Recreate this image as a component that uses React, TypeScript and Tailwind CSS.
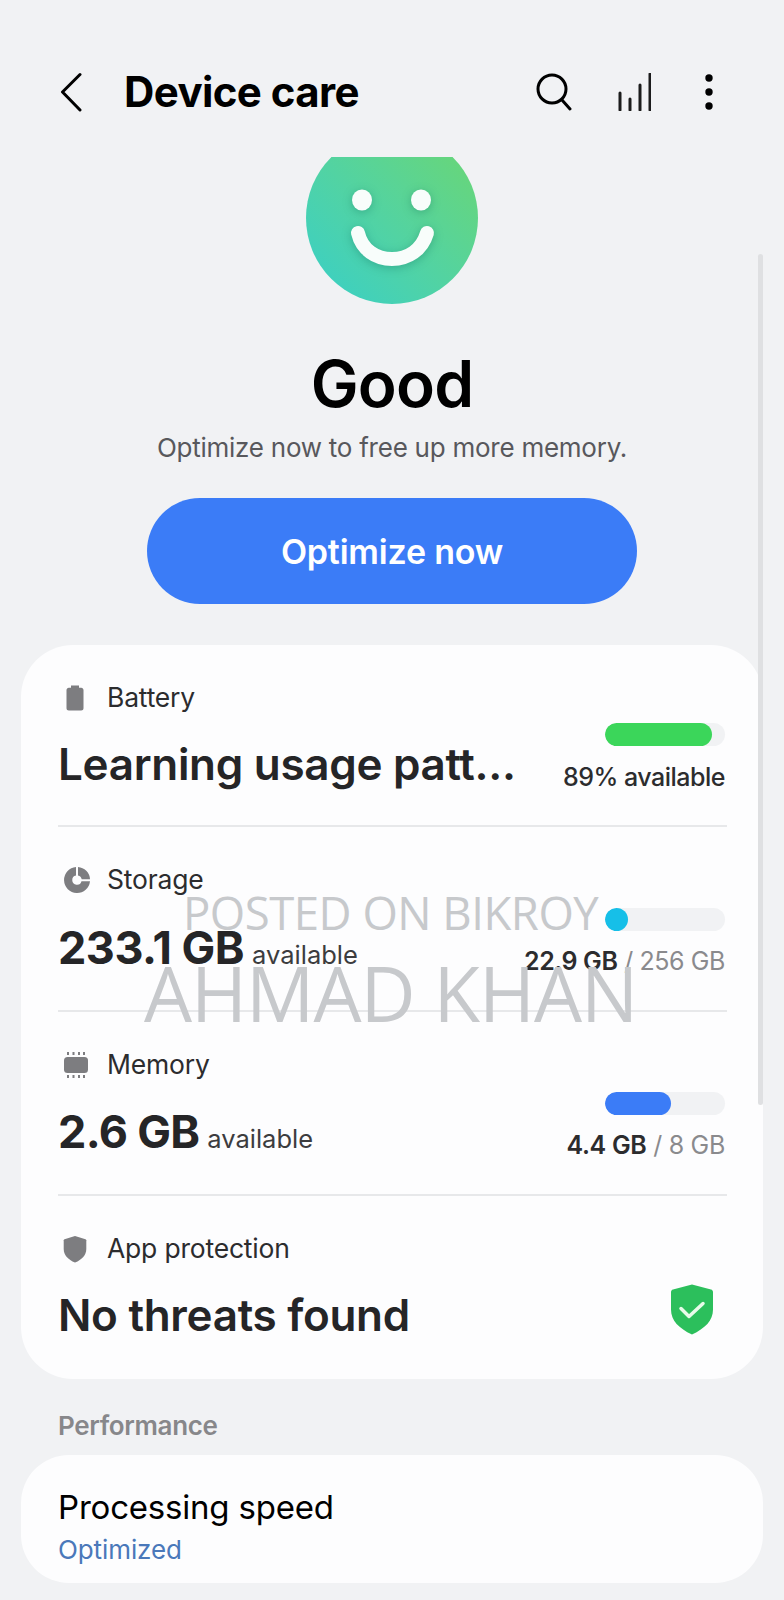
import * as React from "react";

const rowIcons = {
  battery: (
    <svg viewBox="0 0 24 28" className="w-[24px] h-[28px] fill-[#7d7d80]">
      <path d="M8 1.500h8v2.200h2.200c1.300 0 2.300 1 2.300 2.300v18.200c0 1.300-1 2.300-2.300 2.300H5.800c-1.300 0-2.300-1-2.300-2.300V6c0-1.300 1-2.300 2.300-2.300H8z" />
    </svg>
  ),
  storage: (
    <svg viewBox="0 0 28 28" className="w-[28px] h-[28px] fill-[#7d7d80]">
      <path d="M13 1.050A13 13 0 1 0 27 15.200H18.500A4.700 4.700 0 1 1 13 9.400z" />
      <path d="M15 1A13 13 0 0 1 27 13.200H18.700A4.700 4.700 0 0 0 15 9.400z" />
    </svg>
  ),
  memory: (
    <svg viewBox="0 0 26 28" className="w-[26px] h-[28px] fill-[#7d7d80]">
      <rect x="1" y="6" width="24" height="16" rx="3.500" />
      <rect x="4" y="1" width="2" height="3" />
      <rect x="9.500" y="1" width="2" height="3" />
      <rect x="15" y="1" width="2" height="3" />
      <rect x="20" y="1" width="2" height="3" />
      <rect x="4" y="24" width="2" height="3" />
      <rect x="9.500" y="24" width="2" height="3" />
      <rect x="15" y="24" width="2" height="3" />
      <rect x="20" y="24" width="2" height="3" />
    </svg>
  ),
  shield: (
    <svg viewBox="0 0 24 28" className="w-[24px] h-[28px] fill-[#7d7d80]">
      <path d="M12 1l10.500 3.200c.5.200.8.600.8 1.100V14c0 6-4.300 10.800-11.300 13.500C5 24.800.7 20 .7 14V5.300c0-.5.300-.9.800-1.100z" />
    </svg>
  ),
};

function Label({ icon, text }: { icon: React.ReactNode; text: string }) {
  return (
    <div className="flex items-center h-[32px]">
      <div className="w-[49px] pl-[5px] flex items-center">{icon}</div>
      <span className="text-[26.500px] text-[#2c2c2e] tracking-[-0.2px]">{text}</span>
    </div>
  );
}

function Bar({ fill, color }: { fill: string; color: string }) {
  return (
    <div className="w-[120px] h-[23px] rounded-full bg-[#f1f2f4] overflow-hidden">
      <div className={`h-full rounded-full ${fill} ${color}`} />
    </div>
  );
}

export default function App() {
  return (
    <div className="relative w-[784px] h-[1600px] bg-[#f1f2f4] overflow-hidden font-['Inter',sans-serif]">
      {/* Top bar */}
      <header className="flex items-center h-[157px] pl-[58px] pr-[71px] pt-[26px]">
        <svg viewBox="0 0 26 40" className="w-[26px] h-[40px] fill-none stroke-black stroke-[3] mr-[40px]">
          <path d="M22 2.500 4.500 20 22 38" strokeLinecap="round" strokeLinejoin="round" />
        </svg>
        <h1 className="text-[42px] font-bold text-black tracking-[-0.6px] flex-1">Device care</h1>
        <svg viewBox="0 0 38 38" className="w-[38px] h-[38px] fill-none stroke-black stroke-[3] mr-[44px]">
          <circle cx="17" cy="16" r="14" />
          <path d="m27 27 8 9" strokeLinecap="round" />
        </svg>
        <svg viewBox="0 0 34 38" className="w-[34px] h-[38px] fill-none stroke-[#1c1c1c] stroke-[3] mr-[54px]">
          <path d="M3 20v17M13 26v11M23 12v25M33 1v36" strokeLinecap="round" />
        </svg>
        <svg viewBox="0 0 8 36" className="w-[8px] h-[36px] fill-black">
          <circle cx="4" cy="4" r="3.700" />
          <circle cx="4" cy="18" r="3.700" />
          <circle cx="4" cy="32" r="3.700" />
        </svg>
      </header>

      {/* Face, the list clips its top edge */}
      <div className="h-[147px] overflow-hidden flex justify-center">
        <div className="w-[172px] h-[172px] shrink-0 -mt-[25px] rounded-full bg-gradient-to-tr from-[#36cfc8] to-[#6cd66e] flex items-center justify-center">
          <svg viewBox="0 0 172 172" className="w-[172px] h-[172px] drop-shadow-[0_2px_5px_rgba(0,90,80,0.3)]">
            <ellipse cx="56" cy="68" rx="10" ry="10.500" fill="#f8fdfb" />
            <ellipse cx="115" cy="68" rx="10" ry="10.500" fill="#f8fdfb" />
            <path d="M52 101C56 118 70 127 86 127S116 118 121 101" fill="none" stroke="#f8fdfb" strokeWidth="14" strokeLinecap="round" />
          </svg>
        </div>
      </div>

      <div className="flex flex-col items-center">
        <h2 className="mt-[44px] h-[72px] leading-[72px] text-[64px] font-semibold text-black tracking-[-0.8px]">Good</h2>
        <p className="mt-[12px] h-[32px] leading-[32px] text-[26px] text-[#58585c] tracking-[-0.25px]">Optimize now to free up more memory.</p>
        <button className="mt-[34px] w-[490px] h-[106px] rounded-full bg-[#3b7cf7] text-white text-[34px] font-semibold tracking-[-0.2px]">
          Optimize now
        </button>
      </div>

      {/* Summary card */}
      <section className="mt-[41px] mx-[21px] w-[742px] h-[734px] rounded-[52px] bg-[#fdfdfe] pl-[37px] pr-[36px] flex flex-col">
        <div className="h-[182px] pt-[37px] border-b-2 border-[#e7e8ea] flex flex-col">
          <Label icon={rowIcons.battery} text="Battery" />
          <div className="flex justify-between mt-[9px]">
            <div className="text-[44px] font-semibold text-[#252527] tracking-[-0.3px] mt-[8px]">Learning usage patt...</div>
            <div className="flex flex-col items-end mr-[2px] w-[170px]">
              <Bar fill="w-[107px]" color="bg-[#3bd65a]" />
              <span className="mt-[13px] text-[25px] font-medium text-[#2c2c2e] tracking-[-0.5px]">89% available</span>
            </div>
          </div>
        </div>

        <div className="h-[185px] pt-[37px] border-b-2 border-[#e7e8ea] flex flex-col">
          <Label icon={rowIcons.storage} text="Storage" />
          <div className="flex justify-between mt-[10px]">
            <div className="mt-[8px] flex items-baseline gap-[8px]">
              <span className="text-[45px] font-bold text-[#252527] tracking-[-0.5px]">233.1 GB</span>
              <span className="text-[25.500px] text-[#3c3c3e]">available</span>
            </div>
            <div className="flex flex-col items-end mr-[2px] mt-[2px]">
              <Bar fill="w-[23px]" color="bg-[#16bfe8]" />
              <span className="mt-[12px] text-[25px] tracking-[-0.4px] text-[#8a8a8d]">
                <span className="font-semibold text-[#2c2c2e]">22.9 GB</span> / 256 GB
              </span>
            </div>
          </div>
        </div>

        <div className="h-[184px] pt-[37px] border-b-2 border-[#e7e8ea] flex flex-col">
          <Label icon={rowIcons.memory} text="Memory" />
          <div className="flex justify-between mt-[10px]">
            <div className="mt-[7px] flex items-baseline gap-[8px]">
              <span className="text-[45px] font-bold text-[#252527] tracking-[-0.7px]">2.6 GB</span>
              <span className="text-[25.500px] text-[#3c3c3e]">available</span>
            </div>
            <div className="flex flex-col items-end mr-[2px] mt-[1px]">
              <Bar fill="w-[66px]" color="bg-[#3b7cf7]" />
              <span className="mt-[12px] text-[25px] tracking-[-0.3px] text-[#8a8a8d]">
                <span className="font-semibold text-[#2c2c2e]">4.4 GB</span> / 8 GB
              </span>
            </div>
          </div>
        </div>

        <div className="pt-[37px] flex flex-col">
          <Label icon={rowIcons.shield} text="App protection" />
          <div className="flex justify-between items-center mt-[10px]">
            <div className="text-[44px] font-semibold text-[#252527] tracking-[-0.3px] mt-[7px]">No threats found</div>
            <svg viewBox="0 0 42 50" className="w-[42px] h-[51px] mr-[14px] -mt-[4px]">
              <path d="M21 0l19 5c1.200.3 2 1.300 2 2.500V25c0 11-8 19-21 25C8 44 0 36 0 25V7.500C0 6.300.8 5.300 2 5z" fill="#2cbf5c" />
              <path d="m10 24 8 8 14-13" fill="none" stroke="#e8fbe9" strokeWidth="3.500" strokeLinecap="round" strokeLinejoin="round" />
            </svg>
          </div>
        </div>
      </section>

      <h3 className="mt-[32px] ml-[58px] h-[30px] leading-[30px] text-[26px] font-semibold text-[#87878a] tracking-[-0.35px]">Performance</h3>

      <section className="mt-[14px] mx-[21px] w-[742px] h-[128px] rounded-[48px] bg-[#fdfdfe] px-[37px] pt-[32px]">
        <div className="h-[40px] leading-[40px] text-[33px] text-black tracking-[-0.2px]">Processing speed</div>
        <div className="mt-[7px] h-[32px] leading-[32px] text-[26px] text-[#4a78ba] tracking-[-0.1px]">Optimized</div>
      </section>

      {/* Scrollbar */}
      <div className="absolute left-[758px] top-[254px] w-[5px] h-[851px] rounded-full bg-[#dfe0e2]" />

      {/* Watermark over the card */}
      <div className="absolute left-[183px] top-[882px] h-[60px] leading-[60px] text-[45.500px] text-[#c7c9cc] font-['Open_Sans',sans-serif] whitespace-nowrap tracking-[-0.5px]">
        POSTED ON BIKROY
      </div>
      <div className="absolute left-[144px] top-[943px] h-[100px] leading-[100px] text-[76px] text-[#c7c9cc] font-['Open_Sans',sans-serif] whitespace-nowrap tracking-[-1px]">
        AHMAD KHAN
      </div>
    </div>
  );
}
